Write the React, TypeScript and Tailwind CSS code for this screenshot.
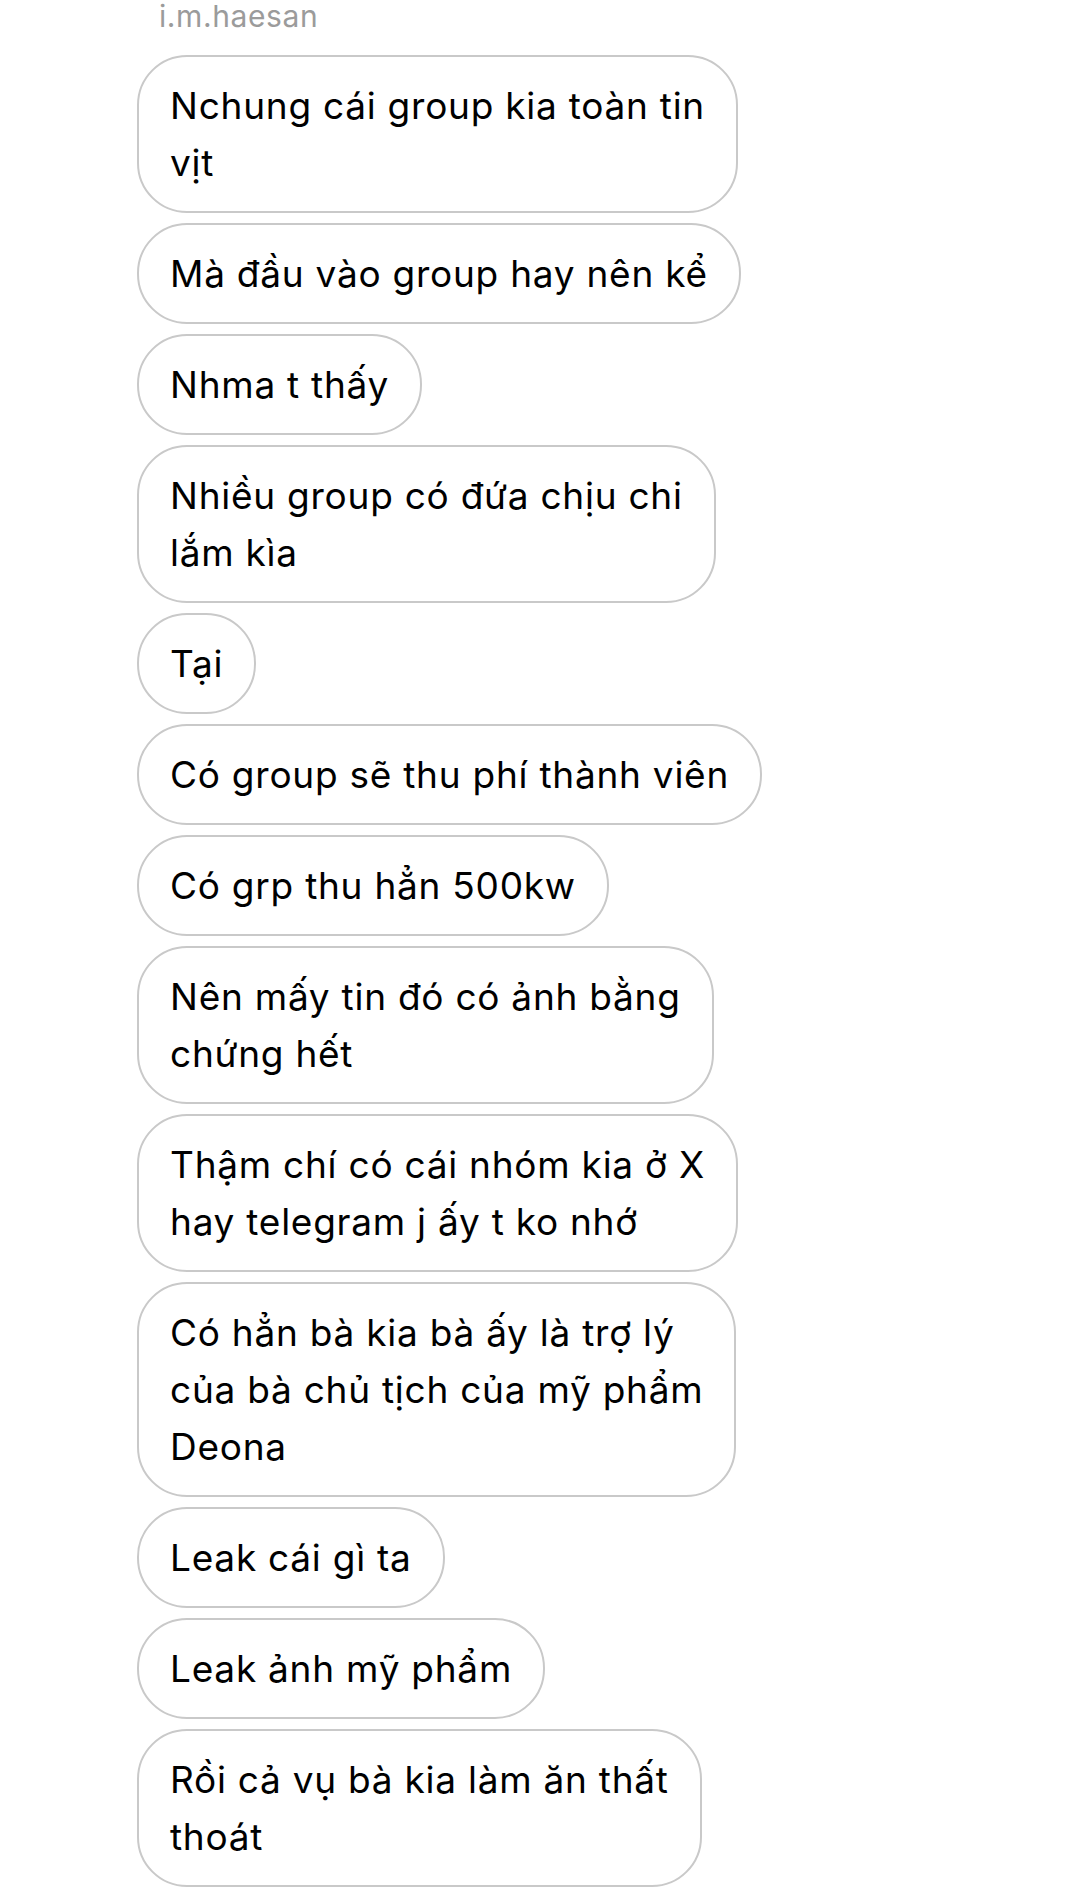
import React from "react";

const messages: string[][] = [
  ["Nchung cái group kia toàn tin", "vịt"],
  ["Mà đầu vào group hay nên kể"],
  ["Nhma t thấy"],
  ["Nhiều group có đứa chịu chi", "lắm kìa"],
  ["Tại"],
  ["Có group sẽ thu phí thành viên"],
  ["Có grp thu hẳn 500kw"],
  ["Nên mấy tin đó có ảnh bằng", "chứng hết"],
  ["Thậm chí có cái nhóm kia ở X", "hay telegram j ấy t ko nhớ"],
  ["Có hẳn bà kia bà ấy là trợ lý", "của bà chủ tịch của mỹ phẩm", "Deona"],
  ["Leak cái gì ta"],
  ["Leak ảnh mỹ phẩm"],
  ["Rồi cả vụ bà kia làm ăn thất", "thoát"],
];

export default function App() {
  return (
    <div
      className="w-[1080px] h-[1891px] bg-white overflow-hidden"
      style={{ fontFamily: "Inter, 'Noto Sans', sans-serif" }}
    >
      <div className="pl-[159px] h-[55px] text-[30px] leading-[32px] tracking-[0.6px] text-[#9b9b9b]">
        i.m.haesan
      </div>
      <div className="flex flex-col items-start gap-[10px] pl-[137px]">
        {messages.map((lines, i) => (
          <div
            key={i}
            className="border-2 border-[#c9c9c9] rounded-[50px] px-[31px] py-[20px] text-[37px] leading-[57px] tracking-[0.75px] text-black whitespace-nowrap"
          >
            {lines.map((l, j) => (
              <div key={j}>{l}</div>
            ))}
          </div>
        ))}
      </div>
    </div>
  );
}
